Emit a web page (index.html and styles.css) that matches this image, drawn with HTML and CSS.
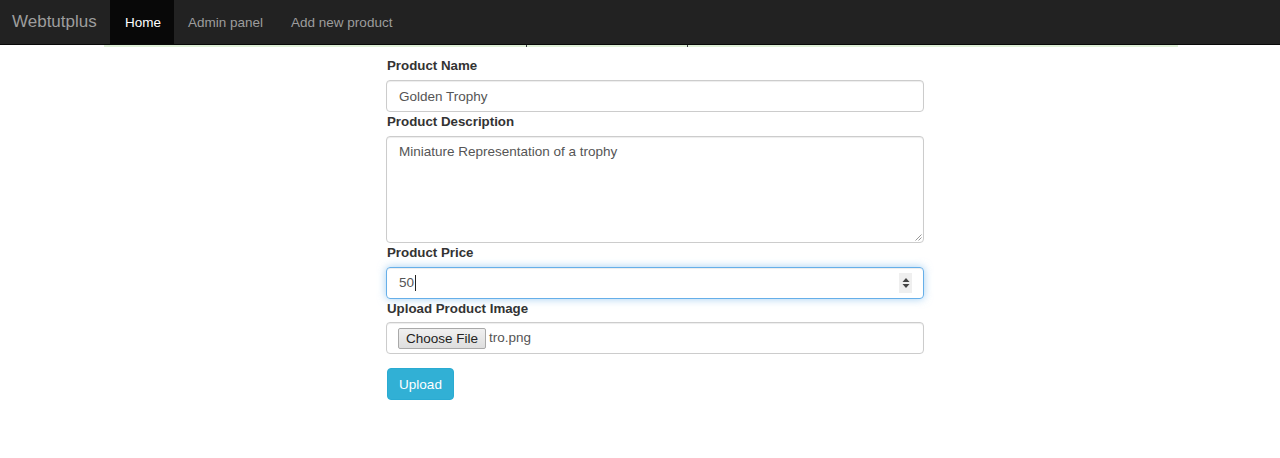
FILE: index.html
```html
<!DOCTYPE html>
<html>
<head>
<meta charset="utf-8">
<title>Webtutplus</title>
<link rel="stylesheet" href="styles.css">
</head>
<body>
<nav class="navbar">
  <a class="brand">Webtutplus</a>
  <ul class="nav">
    <li class="active"><a>Home</a></li>
    <li><a>Admin panel</a></li>
    <li><a>Add new product</a></li>
  </ul>
</nav>
<div class="alert-strip"><span class="mark m1"></span><span class="mark m2"></span></div>
<main class="form-wrap">
  <form class="product-form">
    <div class="group">
      <label>Product Name</label>
      <div class="control">Golden Trophy</div>
    </div>
    <div class="group">
      <label>Product Description</label>
      <div class="control textarea">Miniature Representation of a trophy
        <svg class="grip" width="7" height="7" viewBox="0 0 7 7"><path d="M6.5 0.5 L0.5 6.5 M6.5 3.5 L3.5 6.5" stroke="#999" stroke-width="1" fill="none"/></svg>
      </div>
    </div>
    <div class="group">
      <label>Product Price</label>
      <div class="control focus number"><span class="val">50</span><span class="caret"></span><span class="spin"><svg width="8" height="14" viewBox="0 0 8 14"><path d="M4 2 L7.5 6 L0.5 6 Z M0.5 8 L7.5 8 L4 12 Z" fill="#444"/></svg></span></div>
    </div>
    <div class="group">
      <label>Upload Product Image</label>
      <div class="control file"><span class="choose">Choose File</span><span class="fname">tro.png</span></div>
    </div>
    <button type="button" class="btn-info">Upload</button>
  </form>
</main>
</body>
</html>
```

FILE: styles.css
```css
html, body {
  margin: 0;
  padding: 0;
  background: #fff;
  font-family: "Liberation Sans", Arial, sans-serif;
  font-size: 13.5px;
  color: #333;
}
.navbar {
  display: flex;
  align-items: stretch;
  height: 44px;
  background: #222;
  border-bottom: 1px solid #080808;
}
.brand {
  box-sizing: border-box;
  display: flex;
  align-items: center;
  padding: 0 0 0 12px;
  font-size: 17px;
  color: #9d9d9d;
  width: 110px;
}
.nav {
  display: flex;
  list-style: none;
  margin: 0;
  padding: 0;
}
.nav li a {
  display: flex;
  align-items: center;
  height: 44px;
  padding: 0 14px;
  color: #9d9d9d;
  font-size: 13.5px;
}
.nav li.active a {
  background: #080808;
  color: #fff;
  padding-left: 15px;
  padding-right: 13px;
}
.alert-strip {
  display: flex;
  margin-left: 104px;
  width: 1074px;
  height: 2px;
  background: #dff0d8;
}
.mark {
  display: block;
  width: 1px;
  height: 2px;
  background: #3a3a40;
}
.m1 { margin-left: 422px; }
.m2 { margin-left: 160px; }
.form-wrap {
  margin-left: 386px;
  width: 538px;
  padding-top: 9px;
}
.group {
  display: flex;
  flex-direction: column;
}
label {
  display: block;
  font-weight: bold;
  font-size: 13.3px;
  line-height: 20px;
  height: 20px;
  margin-bottom: 4px;
  padding-left: 1px;
}
.control {
  box-sizing: border-box;
  height: 32px;
  padding: 6px 12px;
  border: 1px solid #ccc;
  border-radius: 4px;
  box-shadow: inset 0 1px 1px rgba(0,0,0,.075);
  color: #555;
  line-height: 20px;
  position: relative;
}
.textarea {
  height: 107px;
  padding-top: 5px;
}
.grip {
  position: absolute;
  right: 1px;
  bottom: 1px;
}
.number {
  display: flex;
  align-items: center;
}
.focus {
  border-color: #66afe9;
  box-shadow: inset 0 1px 1px rgba(0,0,0,.075), 0 0 8px rgba(102,175,233,.6);
}
.caret {
  width: 1px;
  height: 16px;
  background: #222;
  margin-left: 1px;
}
.spin {
  margin-left: auto;
  margin-right: -1px;
  width: 13px;
  height: 20px;
  background: #efefef;
  display: flex;
  align-items: center;
  justify-content: center;
}
.file {
  display: flex;
  align-items: center;
  margin-top: -1px;
  padding: 0 0 0 11px;
}
.choose {
  box-sizing: border-box;
  height: 21px;
  padding: 0 7px;
  border: 1px solid #a9a9a9;
  border-radius: 2px;
  background: linear-gradient(#f0f0f0, #dedede);
  color: #222;
  font-size: 13.5px;
  line-height: 19px;
}
.fname {
  margin-left: 3px;
  color: #555;
}
.btn-info {
  margin-top: 14px;
  margin-left: 1px;
  height: 32px;
  width: 67px;
  border: 1px solid #2aabd2;
  border-radius: 4px;
  background: #31b0d5;
  color: #fff;
  font-family: "Liberation Sans", Arial, sans-serif;
  font-size: 13.5px;
  padding: 0;
}
```
